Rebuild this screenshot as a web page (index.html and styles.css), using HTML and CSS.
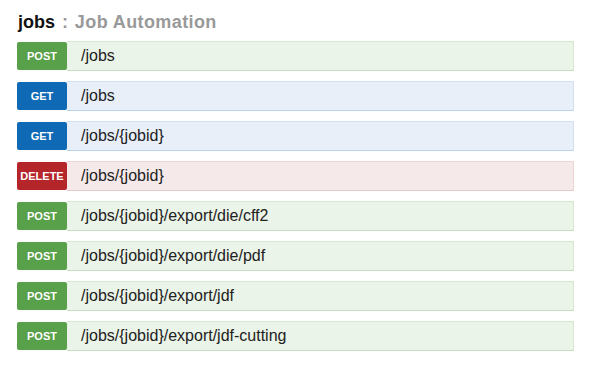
FILE: index.html
```html
<!DOCTYPE html>
<html lang="en">
<head>
  <meta charset="UTF-8" />
  <title>jobs : Job Automation</title>
  <link rel="stylesheet" href="styles.css">
</head>
<body>
  <h2 class="resource">
    <span class="resource-name">jobs</span>
    <span class="resource-desc"><span class="sep">:</span> Job Automation</span>
  </h2>

  <ul class="endpoints">
    <li class="endpoint post"><span class="method">POST</span><span class="path">/jobs</span></li>
    <li class="endpoint get"><span class="method">GET</span><span class="path">/jobs</span></li>
    <li class="endpoint get"><span class="method">GET</span><span class="path">/jobs/{jobid}</span></li>
    <li class="endpoint delete"><span class="method">DELETE</span><span class="path">/jobs/{jobid}</span></li>
    <li class="endpoint post"><span class="method">POST</span><span class="path">/jobs/{jobid}/export/die/cff2</span></li>
    <li class="endpoint post"><span class="method">POST</span><span class="path">/jobs/{jobid}/export/die/pdf</span></li>
    <li class="endpoint post"><span class="method">POST</span><span class="path">/jobs/{jobid}/export/jdf</span></li>
    <li class="endpoint post"><span class="method">POST</span><span class="path">/jobs/{jobid}/export/jdf-cutting</span></li>
  </ul>
</body>
</html>
```

FILE: styles.css
```css
body {
  margin: 0;
  padding: 11px 26px 0 17px;
  background: #fff;
  font-family: "Liberation Sans", Arial, sans-serif;
  color: #222;
}

.resource {
  margin: 0 0 8px 1px;
  font-size: 18px;
  line-height: 22px;
  font-weight: bold;
}

.resource-name {
  color: #111;
}

.resource-desc {
  color: #999;
  margin-left: 2px;
  letter-spacing: 0.4px;
}

.sep {
  margin-right: 1px;
}

.endpoints {
  list-style: none;
  margin: 0;
  padding: 0;
  display: flex;
  flex-direction: column;
  gap: 10px;
}

.endpoint {
  display: flex;
  height: 30px;
}

.method {
  width: 50px;
  margin: 1px 0;
  border-radius: 2px;
  display: flex;
  align-items: center;
  justify-content: center;
  color: #fff;
  font-size: 11px;
  font-weight: bold;
  letter-spacing: 0;
}

.path {
  flex: 1;
  display: flex;
  align-items: center;
  padding-left: 14px;
  font-size: 16px;
  border: 1px solid;
  border-left: none;
}

.post .method { background: #59a04a; }
.post .path { background: #ebf4e8; border-color: #d6e8d0; border-bottom-color: #c8dec1; }

.get .method { background: #0f69b4; }
.get .path { background: #e8eff8; border-color: #d3e1f0; border-bottom-color: #b9d3ec; }

.delete .method { background: #b4262a; }
.delete .path { background: #f6e9e9; border-color: #ecd5d5; border-bottom-color: #e6c9ca; }
```
